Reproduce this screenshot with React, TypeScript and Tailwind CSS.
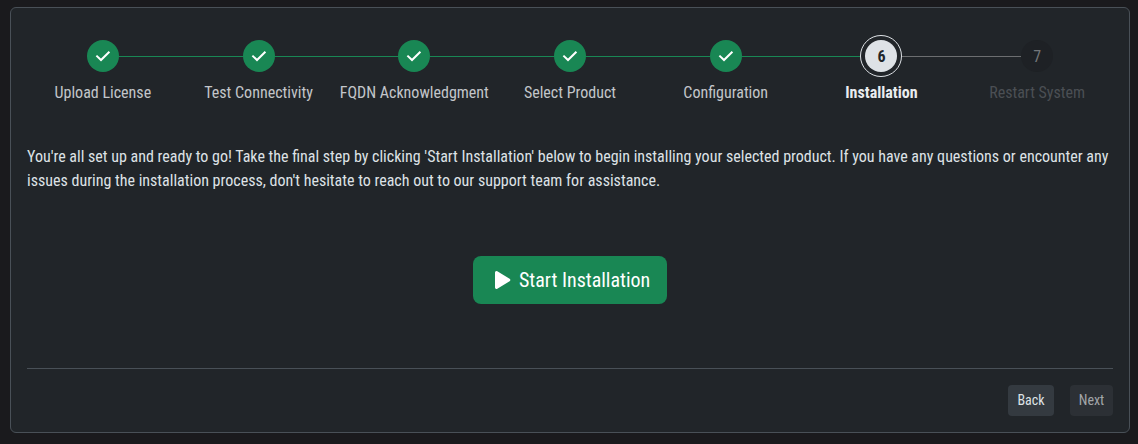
type StepState = 'done' | 'current' | 'upcoming';

const steps: { label: string; state: StepState }[] = [
  { label: 'Upload License', state: 'done' },
  { label: 'Test Connectivity', state: 'done' },
  { label: 'FQDN Acknowledgment', state: 'done' },
  { label: 'Select Product', state: 'done' },
  { label: 'Configuration', state: 'done' },
  { label: 'Installation', state: 'current' },
  { label: 'Restart System', state: 'upcoming' },
];

const circleStyles: Record<StepState, string> = {
  done: 'bg-[#198754] text-white',
  current: 'bg-[#dee2e6] pt-0.5 font-bold text-[#212529] outline-1 outline-offset-4 outline-[#dee2e6]',
  upcoming: 'bg-[#1e2125] pt-0.5 text-[#74777a]',
};

const labelStyles: Record<StepState, string> = {
  done: 'text-[#c3c6ca]',
  current: 'font-bold text-[#e9ecef]',
  upcoming: 'text-[#4b4f54]',
};

function Check() {
  return (
    <svg className="size-4" viewBox="0 0 16 16" fill="none" stroke="currentColor" strokeWidth="2">
      <path d="M1.4 7.6 6 12 14.4 3.7" />
    </svg>
  );
}

function Play() {
  return (
    <svg className="h-[18px] w-4" viewBox="0 0 16 18" fill="currentColor">
      <path d="M2.3.3 14.6 7.7a1.5 1.5 0 0 1 0 2.6L2.3 17.7A1.5 1.5 0 0 1 0 16.4V1.6A1.5 1.5 0 0 1 2.3.3Z" />
    </svg>
  );
}

function Line({ shown, tone, side }: { shown: boolean; tone: string; side: string }) {
  return <span className={`mt-px h-px flex-1 ${side} ${shown ? tone : ''}`} />;
}

function Stepper() {
  return (
    <ol className="-mx-0.5 grid grid-cols-7">
      {steps.map(({ label, state }, i) => (
        <li key={label} className="flex flex-col items-center gap-[9px]">
          <div className="flex w-full items-center">
            <Line
              shown={i > 0}
              tone={state === 'upcoming' ? 'bg-[#6c6e70]' : 'bg-[#198754]'}
              side={state === 'current' ? 'mr-[5px]' : ''}
            />
            <span className={`flex size-8 items-center justify-center rounded-full ${circleStyles[state]}`}>
              {state === 'done' ? <Check /> : i + 1}
            </span>
            <Line
              shown={i < steps.length - 1}
              tone={state === 'done' ? 'bg-[#198754]' : 'bg-[#6c6e70]'}
              side={state === 'current' ? 'ml-[5px]' : ''}
            />
          </div>
          <span className={`whitespace-nowrap ${labelStyles[state]}`}>{label}</span>
        </li>
      ))}
    </ol>
  );
}

export default function App() {
  return (
    <div className="h-[444px] bg-[#1a1a1d] pt-[7px] pr-2 pl-[10px] font-['Roboto_Condensed',Roboto,sans-serif] text-base font-stretch-condensed text-[#dee2e6]">
      <main className="flex h-[426px] flex-col rounded-md border border-[#495057] bg-[#212529] px-4 pt-8 pb-4">
        <Stepper />
        <p className="mt-10">
          You're all set up and ready to go! Take the final step by clicking 'Start Installation' below to begin installing your
          selected product. If you have any questions or encounter any issues during the installation process, don't hesitate to
          reach out to our support team for assistance.
        </p>
        <button className="mt-[63px] flex h-12 w-[194px] items-center gap-2 self-center rounded-lg bg-[#198754] pl-[22px] text-xl text-white">
          <Play />
          Start Installation
        </button>
        <hr className="mt-16 border-[#495057]" />
        <div className="mt-4 flex justify-end gap-4 text-sm">
          <button className="h-[31px] w-[46px] rounded bg-[#343a40] pb-0.5 text-[#dee2e6]">Back</button>
          <button className="h-[31px] w-[43px] rounded bg-[#2c3035] pb-0.5 text-[#a3a6a9]" disabled>
            Next
          </button>
        </div>
      </main>
    </div>
  );
}
